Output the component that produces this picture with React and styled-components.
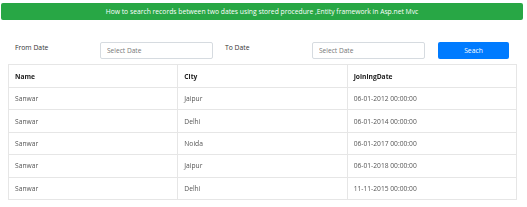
import React from "react";
import styled, { createGlobalStyle } from "styled-components";

const Global = createGlobalStyle`
  html, body { margin: 0; padding: 0; background: #fff; }
  body { font-family: "Open Sans", "Noto Sans", sans-serif; color: #212529; }
`;

const Page = styled.div`
  width: 527px;
  height: 207px;
  overflow: hidden;
  filter: grayscale(1);
`;

const Banner = styled.div`
  margin: 3px 4px 0 1px;
  height: 17px;
  background: #28a745;
  border-radius: 2px;
  color: #fff;
  font-size: 6.75px;
  display: flex;
  align-items: center;
  justify-content: center;
`;

const Colored = styled.div`
  filter: none;
`;

const FormRow = styled.div`
  display: flex;
  align-items: flex-start;
  margin-top: 22px;
  padding-left: 15px;
  height: 17px;
`;

const Label = styled.label`
  width: ${(p) => p.$w}px;
  margin-left: ${(p) => p.$ml || 0}px;
  font-size: 6.8px;
  line-height: 12px;
  color: #333;
`;

const Input = styled.input`
  box-sizing: border-box;
  width: 113px;
  height: 17px;
  border: 1px solid #d6dbe0;
  border-radius: 2px;
  padding: 0 6px;
  font-family: inherit;
  font-size: 6.6px;
  color: #495057;
  outline: none;
  &::placeholder { color: #777; }
`;

const Button = styled.button`
  box-sizing: border-box;
  margin-left: 13px;
  width: 71px;
  height: 17px;
  border: none;
  border-radius: 2px;
  background: #007bff;
  color: #fff;
  font-family: inherit;
  font-size: 6.8px;
  padding: 0;
`;

const Table = styled.table`
  margin: 5px 0 0 8px;
  width: 509px;
  border-collapse: collapse;
  table-layout: fixed;
  border: 1px solid #e3e6ea;
  font-size: 6.7px;
  filter: grayscale(1);
`;

const Th = styled.th`
  height: 22px;
  text-align: left;
  padding: 0 6px;
  font-weight: 700;
  color: #222;
  border: 1px solid #e3e6ea;
`;

const Td = styled.td`
  height: 21.4px;
  padding: 0 6px;
  color: #555;
  border: 1px solid #e3e6ea;
`;

const rows = [
  ["Sanwar", "Jaipur", "06-01-2012 00:00:00"],
  ["Sanwar", "Delhi", "06-01-2014 00:00:00"],
  ["Sanwar", "Noida", "06-01-2017 00:00:00"],
  ["Sanwar", "Jaipur", "06-01-2018 00:00:00"],
  ["Sanwar", "Delhi", "11-11-2015 00:00:00"],
];

export default function App() {
  return (
    <>
      <Global />
      <Colored>
        <Banner>
          How to search records between two dates using stored procedure ,Entity framework in Asp.net Mvc
        </Banner>
        <FormRow>
          <Label $w={85}>From Date</Label>
          <Input placeholder="Select Date" />
          <Label $w={87} $ml={12}>To Date</Label>
          <Input placeholder="Select Date" />
          <Button>Seach</Button>
        </FormRow>
      </Colored>
      <Table>
        <thead>
          <tr>
            <Th>Name</Th>
            <Th>City</Th>
            <Th>JoiningDate</Th>
          </tr>
        </thead>
        <tbody>
          {rows.map((r, i) => (
            <tr key={i}>
              {r.map((c, j) => (
                <Td key={j}>{c}</Td>
              ))}
            </tr>
          ))}
        </tbody>
      </Table>
    </>
  );
}
